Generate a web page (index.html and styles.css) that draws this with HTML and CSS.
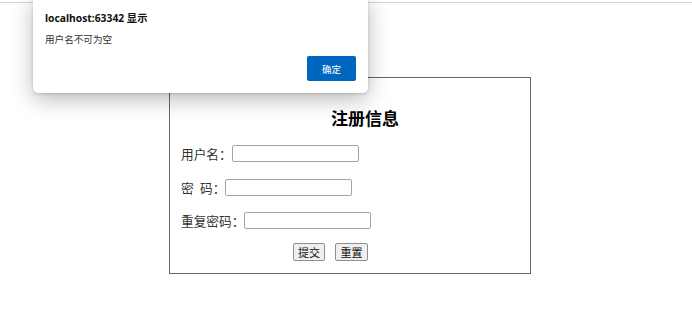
FILE: index.html
```html
<!DOCTYPE html>
<html>

<head>
    <meta http-equiv="Content-Type" content="text/html;charset=UTF-8">
    <title>注册</title>
    <link rel="stylesheet" href="styles.css">
</head>

<body>
    <div class="topline"></div>
    <form class="reg">
        <h2 class="title">注册信息</h2>
        <div class="row">
            <label>用户名：</label><input type="text" class="txt">
        </div>
        <div class="row">
            <label>密&ensp;码：</label><input type="password" class="txt">
        </div>
        <div class="row row3">
            <label>重复密码：</label><input type="password" class="txt">
        </div>
        <div class="btns">
            <button type="button" class="btn">提交</button>
            <button type="button" class="btn">重置</button>
        </div>
    </form>

    <div class="dialog">
        <p class="dlg-title">localhost:63342 显示</p>
        <p class="dlg-msg">用户名不可为空</p>
        <div class="dlg-foot">
            <button type="button" class="ok">确定</button>
        </div>
    </div>
</body>

</html>
```

FILE: styles.css
```css
* {
    box-sizing: border-box;
    margin: 0;
    padding: 0;
}

body {
    width: 692px;
    height: 315px;
    overflow: hidden;
    background: #fff;
    font-family: "Noto Sans CJK SC", "Noto Sans", sans-serif;
    color: #222;
}

.topline {
    height: 3px;
    border-bottom: 1px solid #d4d4d4;
}

.reg {
    width: 362px;
    height: 197px;
    margin: 74px 0 0 169px;
    border: 1px solid #666;
    padding-top: 28px;
}

.title {
    height: 24px;
    line-height: 24px;
    padding-left: 161px;
    font-size: 17px;
    font-weight: bold;
    color: #000;
}

.row {
    display: flex;
    align-items: center;
    height: 17px;
    margin-top: 15px;
    padding-left: 11px;
    font-size: 12.7px;
    color: #333;
}

.row + .row {
    margin-top: 17px;
}

.row.row3 {
    margin-top: 16px;
}

.row label {
    white-space: pre;
}

.txt {
    width: 127px;
    height: 17px;
    border: 1px solid #a5a5a5;
    border-radius: 2px;
    background: #fff;
}

.btns {
    display: flex;
    gap: 10px;
    margin-top: 14px;
    padding-left: 123px;
}

.btn {
    width: 32px;
    height: 18px;
    font-family: "Noto Sans CJK SC", sans-serif;
    font-size: 11px;
    line-height: 16px;
    color: #111;
    background: #efefef;
    border: 1px solid #8f8f8f;
    border-radius: 2px;
}

.btn:last-child {
    width: 33px;
}

/* alert box over the page */
.dialog {
    position: absolute;
    left: 33px;
    top: -4px;
    width: 335px;
    height: 97px;
    background: #fff;
    border-radius: 5px;
    box-shadow: 0 6px 22px rgba(0, 0, 0, 0.28), 0 1px 3px rgba(0, 0, 0, 0.15);
    padding: 14px 12px 0 12px;
}

.dlg-title {
    font-family: "Noto Sans", "Noto Sans CJK SC", sans-serif;
    font-weight: bold;
    font-size: 10.3px;
    height: 16px;
    line-height: 16px;
    color: #111;
}

.dlg-msg {
    margin-top: 6px;
    font-size: 9.6px;
    height: 14px;
    line-height: 14px;
    color: #333;
}

.dlg-foot {
    display: flex;
    justify-content: flex-end;
    margin-top: 10px;
}

.ok {
    width: 49px;
    height: 25px;
    border: none;
    border-radius: 2px;
    background: #0067c0;
    color: #fff;
    font-family: "Noto Sans CJK SC", sans-serif;
    font-size: 9.5px;
}
```
